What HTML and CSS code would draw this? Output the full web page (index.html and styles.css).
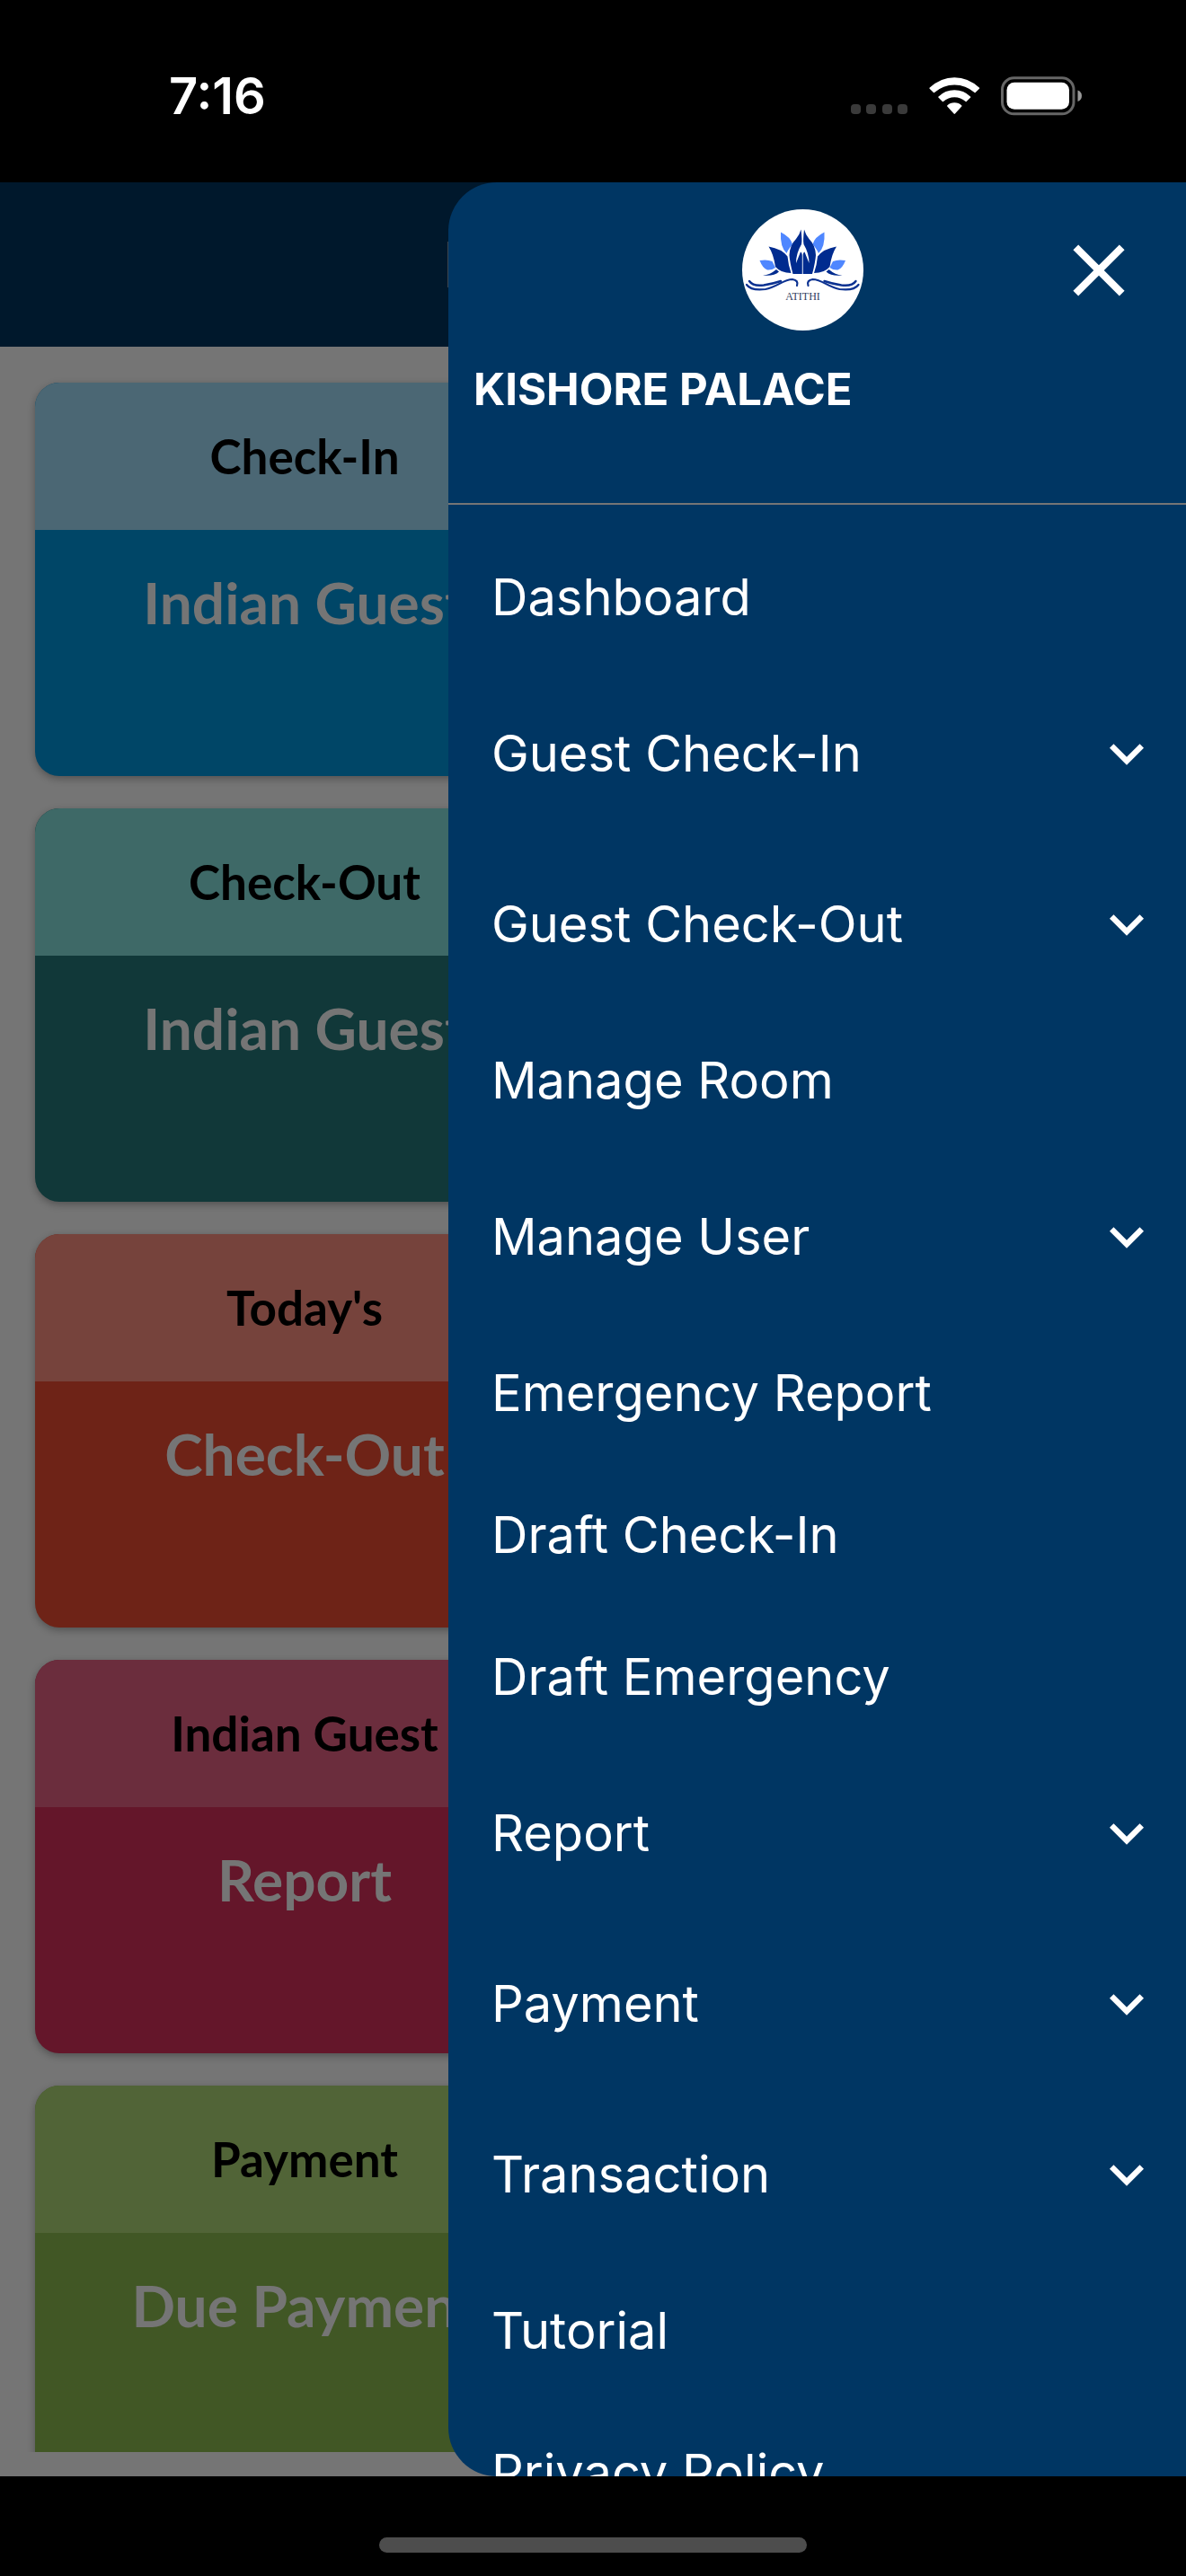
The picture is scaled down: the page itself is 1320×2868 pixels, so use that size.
FILE: index.html
```html
<!DOCTYPE html>
<html lang="en">
<head>
  <meta charset="UTF-8">
  <meta name="viewport" content="width=device-width, initial-scale=1">
  <title>Kishore Palace</title>
  <link rel="stylesheet" href="styles.css">
</head>
<body>
  <!-- Status bar -->
  <div class="status-bar">
    <span class="time">7:16</span>
    <svg class="status-icons" width="260" height="48" viewBox="0 0 260 48" aria-hidden="true">
      <g fill="#3a3a3a">
        <rect x="2" y="33" width="11" height="11" rx="4"/>
        <rect x="19" y="33" width="11" height="11" rx="4"/>
        <rect x="37" y="33" width="11" height="11" rx="4"/>
        <rect x="54" y="33" width="11" height="11" rx="4"/>
      </g>
      <g fill="#fff">
        <path d="M89.500 14.800Q102 3.300 117.300 3.300T145.100 14.800Q145.400 15.300 145 15.700L140.600 20Q140.100 20.400 139.600 20Q130 11.400 117.300 11.400T95 20Q94.500 20.400 94 20L89.600 15.700Q89.200 15.300 89.500 14.800Z"/>
        <path d="M99.300 24.700Q107 17.300 117.300 17.300T135.300 24.700Q135.600 25.200 135.200 25.600L130.700 30Q130.200 30.400 129.700 30Q124.200 25.200 117.300 25.200T104.900 30Q104.400 30.400 103.900 30L99.400 25.600Q99 25.200 99.300 24.700Z"/>
        <path d="M109.200 34.600Q112.500 31.300 117.300 31.300T125.400 34.600Q125.700 35.100 125.300 35.500L118 43.600Q117.300 44.300 116.600 43.600L109.300 35.500Q108.900 35.100 109.200 34.600Z"/>
        <rect x="175.500" y="8.800" width="69.500" height="30" rx="8.500"/>
      </g>
      <rect x="170.500" y="3.800" width="79.500" height="40" rx="13" fill="none" stroke="#666" stroke-width="3"/>
      <path d="M254.500 17.500Q259 19.200 259 23.700T254.500 30Z" fill="#999"/>
    </svg>
  </div>

  <div class="screen">
    <!-- Dashboard under the drawer -->
    <header class="app-bar"><span class="app-logo"></span></header>
    <main class="cards">
      <section class="card check-in">
        <h2>Check-In</h2>
        <p>Indian Guest</p>
      </section>
      <section class="card check-out">
        <h2>Check-Out</h2>
        <p>Indian Guest</p>
      </section>
      <section class="card today">
        <h2>Today's</h2>
        <p>Check-Out</p>
      </section>
      <section class="card guest-report">
        <h2>Indian Guest</h2>
        <p>Report</p>
      </section>
      <section class="card payment">
        <h2>Payment</h2>
        <p>Due Payment</p>
      </section>
    </main>

    <!-- Drawer -->
    <aside class="drawer">
      <div class="drawer-header">
        <div class="drawer-top">
          <svg class="logo" viewBox="0 0 135 135" role="img" aria-label="Atithi">
            <circle cx="67.500" cy="67.500" r="67.500" fill="#fff"/>
            <g fill="#4f87ff">
              <path d="M43 25.500Q54 31 56 39Q51 45 49.500 49Q42 42 43 25.500Z"/>
              <path d="M91.500 25.500Q80.500 31 78.500 39Q83.500 45 85 49Q92.500 42 91.500 25.500Z"/>
              <path d="M19.500 57Q28 55.500 33.500 58L37 65Q33 68 28 67.500Q23 66 19.500 57Z"/>
              <path d="M115 57Q106.500 55.500 101 58L97.500 65Q101.500 68 106.500 67.500Q111.500 66 115 57Z"/>
            </g>
            <g fill="#002b8f">
              <path d="M65.500 22.500Q67 35 66 39Q60 49 60 60L65 47.500Q66.800 48 66.800 52V72H56.500Q53 59 52.500 51Q53 40 60 33Q64 28 65.500 22.500Z"/>
              <path d="M69 22.500Q67.500 35 68.500 39Q74.500 49 74.500 60L69.500 47.500Q67.700 48 67.700 52V72H78Q81.500 59 82 51Q81.500 40 74.500 33Q70.500 28 69 22.500Z"/>
              <path d="M29.500 41.500Q44 44 50.500 52.500Q51.500 63 54.500 71Q43 71 37 64Q35 50 29.500 41.500Z"/>
              <path d="M105 41.500Q90.500 44 84 52.500Q83 63 80 71Q91.500 71 97.500 64Q99.500 50 105 41.500Z"/>
              <path d="M23 73.500Q31 73 38 67L41 69.500Q35 75 23 73.500Z"/>
              <path d="M111.500 73.500Q103.500 73 96.500 67L93.500 69.500Q99.500 75 111.500 73.500Z"/>
            </g>
            <g fill="none" stroke="#0b3191" stroke-linecap="round">
              <path d="M5 84Q10 91 26 89C38 87 46 78 56 78Q63 79 61 85" stroke-width="2.200"/>
              <path d="M8 80Q12 86 24 84.500Q34 83 43 80" stroke-width="2.400"/>
              <path d="M129.500 84Q124.500 91 108.500 89C96.500 87 88.500 78 78.500 78Q71.500 79 73.500 85" stroke-width="2.200"/>
              <path d="M126.500 80Q122.500 86 110.500 84.500Q100.500 83 91.500 80" stroke-width="2.400"/>
            </g>
            <text class="logo-name" x="67.500" y="101" text-anchor="middle">ATITHI</text>
          </svg>
          <button class="close" type="button" aria-label="Close menu">
            <svg viewBox="0 0 24 24" aria-hidden="true"><path d="M19 6.410L17.590 5 12 10.590 6.410 5 5 6.410 10.590 12 5 17.590 6.410 19 12 13.410 17.590 19 19 17.590 13.410 12z"/></svg>
          </button>
        </div>
        <h1 class="hotel">KISHORE PALACE</h1>
      </div>
      <nav class="menu">
        <a class="item" href="#">Dashboard</a>
        <button class="item expandable" type="button">Guest Check-In
          <svg viewBox="0 0 24 24" aria-hidden="true"><path d="M16.590 8.590L12 13.170 7.410 8.590 6 10l6 6 6-6z"/></svg>
        </button>
        <button class="item expandable" type="button">Guest Check-Out
          <svg viewBox="0 0 24 24" aria-hidden="true"><path d="M16.590 8.590L12 13.170 7.410 8.590 6 10l6 6 6-6z"/></svg>
        </button>
        <a class="item" href="#">Manage Room</a>
        <button class="item expandable" type="button">Manage User
          <svg viewBox="0 0 24 24" aria-hidden="true"><path d="M16.590 8.590L12 13.170 7.410 8.590 6 10l6 6 6-6z"/></svg>
        </button>
        <a class="item" href="#">Emergency Report</a>
        <a class="item" href="#">Draft Check-In</a>
        <a class="item" href="#">Draft Emergency</a>
        <button class="item expandable" type="button">Report
          <svg viewBox="0 0 24 24" aria-hidden="true"><path d="M16.590 8.590L12 13.170 7.410 8.590 6 10l6 6 6-6z"/></svg>
        </button>
        <button class="item expandable" type="button">Payment
          <svg viewBox="0 0 24 24" aria-hidden="true"><path d="M16.590 8.590L12 13.170 7.410 8.590 6 10l6 6 6-6z"/></svg>
        </button>
        <button class="item expandable" type="button">Transaction
          <svg viewBox="0 0 24 24" aria-hidden="true"><path d="M16.590 8.590L12 13.170 7.410 8.590 6 10l6 6 6-6z"/></svg>
        </button>
        <a class="item" href="#">Tutorial</a>
        <a class="item" href="#">Privacy Policy</a>
      </nav>
    </aside>
  </div>

  <!-- Home indicator -->
  <div class="home-bar"><span></span></div>
</body>
</html>
```
FILE: styles.css
```css
* { margin: 0; padding: 0; box-sizing: border-box; }
body {
  display: flex;
  flex-direction: column;
  height: 100vh;
  overflow: hidden;
  background: #000;
  color: #fff;
  font-family: Inter, "Liberation Sans", sans-serif;
}

/* ---------- Status bar ---------- */
.status-bar {
  display: flex;
  justify-content: space-between;
  align-items: center;
  height: 203px;
  padding: 10px 115px 0 188px;
}
.time {
  font-size: 56px;
  font-weight: 600;
}

/* ---------- Dashboard ---------- */
.screen {
  position: relative;
  display: flex;
  flex-direction: column;
  flex: 1;
  min-height: 0;
  padding-bottom: 27px;
  background: #757575;
}
.app-bar {
  display: flex;
  flex: none;
  align-items: center;
  justify-content: center;
  height: 183px;
  background: #00182c;
}
.app-logo {
  width: 324px;
  height: 51px;
  background: #3d444c;
}
.cards {
  display: grid;
  grid-template-columns: 1fr 1fr;
  grid-auto-rows: 438px;
  align-content: start;
  gap: 36px 42px;
  flex: 1;
  min-height: 0;
  padding: 40px 39px 0;
  overflow: hidden;
}
.card {
  grid-column: 1;
  border-radius: 27px;
  overflow: hidden;
  font-family: Lato, sans-serif;
  text-align: center;
  box-shadow: 0 3px 8px rgba(0, 0, 0, 0.3);
}
.card h2 {
  height: 164px;
  color: #000;
  font-size: 53px;
  font-weight: 700;
  line-height: 164px;
}
.card p {
  padding-top: 43px;
  color: #757575;
  font-size: 64px;
  font-weight: 700;
  line-height: 76px;
}
.check-in { background: #004667; }
.check-in h2 { background: #4b6774; }
.check-out { background: #113839; }
.check-out h2 { background: #3e6967; }
.today { background: #6e2317; }
.today h2 { background: #76433c; }
.guest-report { background: #64162a; }
.guest-report h2 { background: #6b2d3d; }
.payment { background: #415725; }
.payment h2 { background: #516437; }

/* ---------- Drawer ---------- */
.drawer {
  position: absolute;
  top: 0;
  right: 0;
  bottom: 0;
  width: 62.2%;
  border-radius: 54px 0 0 54px;
  background: #003663;
  overflow: hidden;
}
.drawer-header {
  height: 359px;
  padding: 30px 48px 0 28px;
  border-bottom: 2px solid #757575;
}
.drawer-top {
  display: grid;
  grid-template-columns: 1fr auto 1fr;
  align-items: center;
  margin-left: -12px;
}
.logo {
  grid-column: 2;
  width: 135px;
  height: 135px;
}
.logo-name {
  font-family: "Liberation Serif", serif;
  font-size: 12px;
  fill: #33415f;
}
.close {
  justify-self: end;
  width: 98px;
  height: 98px;
  border: none;
  background: none;
  cursor: pointer;
}
.close svg {
  display: block;
  width: 100%;
  fill: #fff;
}
.hotel {
  margin-top: 36px;
  font-size: 49px;
  font-weight: 700;
  line-height: 60px;
}
.menu {
  padding-top: 24px;
}
.item {
  display: flex;
  align-items: center;
  justify-content: space-between;
  width: 100%;
  height: 158px;
  padding: 0 28px 0 48px;
  border: none;
  background: none;
  color: #fff;
  font-family: inherit;
  font-size: 56px;
  text-align: left;
  text-decoration: none;
  cursor: pointer;
}
.expandable {
  height: 190px;
}
.item svg {
  width: 76px;
  height: 76px;
  fill: #fff;
}

/* ---------- Home indicator ---------- */
.home-bar {
  display: flex;
  justify-content: center;
  align-items: center;
  height: 111px;
  padding-top: 42px;
}
.home-bar span {
  width: 36%;
  height: 17px;
  border-radius: 9px;
  background: #4d4d4d;
}
```
